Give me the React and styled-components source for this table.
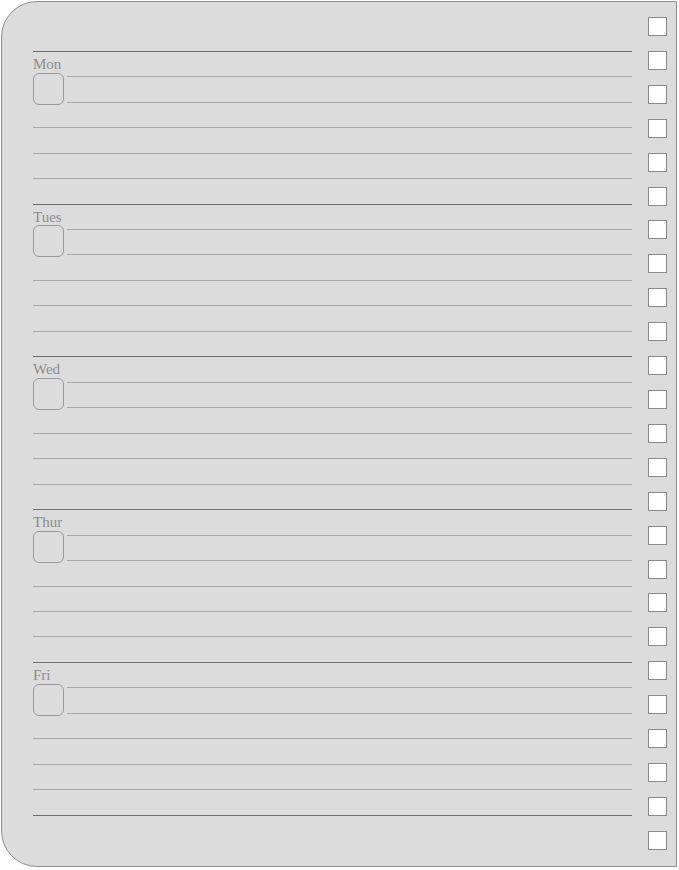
import React from 'react';
import styled, { createGlobalStyle } from 'styled-components';

const GlobalStyle = createGlobalStyle`
  html, body {
    margin: 0;
    padding: 0;
    background: #ffffff;
  }
  body {
    font-family: "Liberation Serif", "Times New Roman", serif;
  }
`;

const ROW = 25.47;

const Page = styled.div`
  padding: 1px 0 0 1px;
  width: 679px;
  height: 870px;
  box-sizing: border-box;
`;

const Card = styled.div`
  width: 676px;
  height: 866px;
  box-sizing: border-box;
  background: #dcdcdc;
  border: 1px solid #8e8e8e;
  border-radius: 36px 0 0 36px;
  display: flex;
  padding-left: 31px;
`;

const Planner = styled.div`
  width: 599px;
  padding-top: 48.7px;
  display: flex;
  flex-direction: column;
`;

const DayBlock = styled.div`
  display: grid;
  grid-template-columns: 34px 1fr;
  grid-template-rows: repeat(6, ${ROW}px);
`;

const HeadRow = styled.div`
  grid-column: 1 / 3;
  grid-row: 1;
  border-top: 1.4px solid #6f6f6f;
  box-sizing: border-box;
`;

const DayLabel = styled.div`
  font-family: "Liberation Serif", "Times New Roman", serif;
  font-size: 15px;
  line-height: 15px;
  color: #8c8c8c;
  padding-top: 5px;
`;

const Line = styled.div`
  grid-column: ${(p) => (p.$short ? '2 / 3' : '1 / 3')};
  grid-row: ${(p) => p.$row};
  border-top: 1px solid #a9a9a9;
`;

const NoteBox = styled.div`
  grid-column: 1;
  grid-row: 2 / 4;
  width: 31px;
  height: 32px;
  margin-top: -3.5px;
  box-sizing: border-box;
  border: 1px solid #9a9a9a;
  border-radius: 6px;
`;

const ClosingLine = styled.div`
  border-top: 1.4px solid #6f6f6f;
`;

const CheckColumn = styled.div`
  margin-left: 16px;
  padding-top: 15px;
  display: flex;
  flex-direction: column;
  gap: 14.92px;
`;

const CheckBox = styled.div`
  width: 19px;
  height: 19px;
  box-sizing: border-box;
  background: #ffffff;
  border: 1px solid #8a8a8a;
`;

const days = ['Mon', 'Tues', 'Wed', 'Thur', 'Fri'];

const Day = ({ name }) => (
  <DayBlock>
    <HeadRow>
      <DayLabel>{name}</DayLabel>
    </HeadRow>
    <NoteBox />
    <Line $row={2} $short />
    <Line $row={3} $short />
    <Line $row={4} />
    <Line $row={5} />
    <Line $row={6} />
  </DayBlock>
);

export default function App() {
  return (
    <>
      <GlobalStyle />
      <Page>
        <Card>
          <Planner>
            {days.map((d) => (
              <Day key={d} name={d} />
            ))}
            <ClosingLine />
          </Planner>
          <CheckColumn>
            {Array.from({ length: 25 }, (_, i) => (
              <CheckBox key={i} />
            ))}
          </CheckColumn>
        </Card>
      </Page>
    </>
  );
}
